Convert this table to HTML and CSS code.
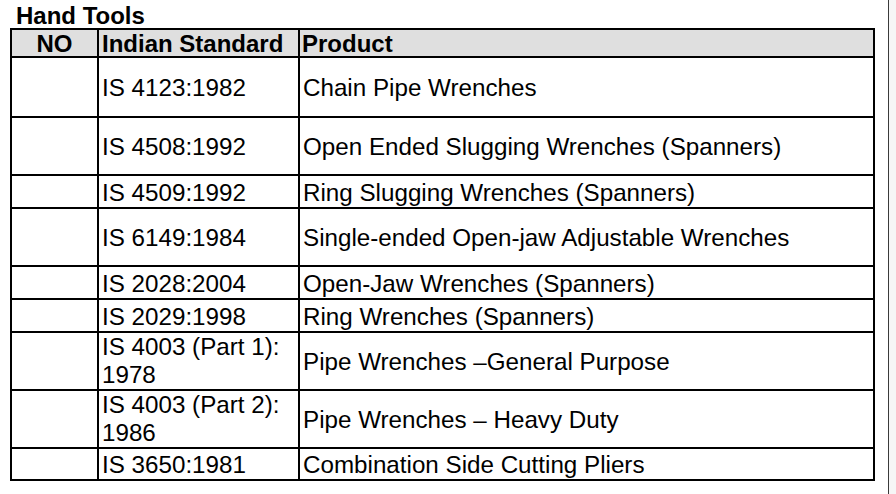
FILE: index.html
```html
<!DOCTYPE html>
<html>
<head>
<meta charset="utf-8">
<title>Hand Tools</title>
<link rel="stylesheet" href="styles.css">
</head>
<body>
<div class="page">
  <div class="sheet">
    <div class="title">Hand Tools</div>
    <table class="grid">
      <colgroup>
        <col class="c-no">
        <col class="c-std">
        <col class="c-prod">
      </colgroup>
      <thead>
        <tr class="h28">
          <th class="no">NO</th>
          <th class="std">Indian Standard</th>
          <th class="prod">Product</th>
        </tr>
      </thead>
      <tbody>
        <tr class="h60"><td></td><td class="std">IS 4123:1982</td><td class="prod">Chain Pipe Wrenches</td></tr>
        <tr class="h58"><td></td><td class="std">IS 4508:1992</td><td class="prod">Open Ended Slugging Wrenches (Spanners)</td></tr>
        <tr class="h33"><td></td><td class="std">IS 4509:1992</td><td class="prod">Ring Slugging Wrenches (Spanners)</td></tr>
        <tr class="h58"><td></td><td class="std">IS 6149:1984</td><td class="prod">Single-ended Open-jaw Adjustable Wrenches</td></tr>
        <tr class="h33"><td></td><td class="std">IS 2028:2004</td><td class="prod">Open-Jaw Wrenches (Spanners)</td></tr>
        <tr class="h33"><td></td><td class="std">IS 2029:1998</td><td class="prod">Ring Wrenches (Spanners)</td></tr>
        <tr class="h58"><td></td><td class="std two">IS 4003 (Part 1):<br>1978</td><td class="prod">Pipe Wrenches –General Purpose</td></tr>
        <tr class="h58"><td></td><td class="std two">IS 4003 (Part 2):<br>1986</td><td class="prod">Pipe Wrenches – Heavy Duty</td></tr>
        <tr class="h32"><td></td><td class="std">IS 3650:1981</td><td class="prod">Combination Side Cutting Pliers</td></tr>
      </tbody>
    </table>
  </div>
  <div class="gutter"></div>
</div>
</body>
</html>
```

FILE: styles.css
```css
html, body {
  margin: 0;
  padding: 0;
  background: #ffffff;
}

body {
  font-family: "Liberation Sans", Arial, sans-serif;
  color: #000;
}

.page {
  display: flex;
  width: 896px;
  height: 494px;
  overflow: hidden;
}

.sheet {
  width: 888px;
  height: 494px;
  border-right: 1px solid #3a3a3a;
  background: #ffffff;
}

.gutter {
  flex: 1;
  background: #f6f6f6;
}

.title {
  font-weight: bold;
  font-size: 24px;
  line-height: 24px;
  padding: 4px 0 0 16px;
  height: 24px;
}

.grid {
  margin-left: 10px;
  width: 865px;
  table-layout: fixed;
  border-collapse: separate;
  border-spacing: 0;
  border-left: 2px solid #000;
  border-top: 2px solid #000;
  font-size: 24.2px;
  line-height: 28px;
}

.c-no { width: 87px; }
.c-std { width: 201px; }
.c-prod { width: 575px; }

.grid th,
.grid td {
  box-sizing: border-box;
  border-right: 2px solid #000;
  border-bottom: 2px solid #000;
  padding: 0;
  vertical-align: middle;
  text-align: left;
  white-space: nowrap;
}

.grid td {
  padding-top: 2px;
}

.grid th {
  background: #dfdfdf;
  font-weight: bold;
  font-size: 24px;
  line-height: 25px;
  padding-top: 1px;
}

.grid th.no { text-align: center; }
.grid th.std { padding-left: 3px; }
.grid th.prod { padding-left: 2px; }

.grid td.std { padding-left: 3px; }
.grid td.prod { padding-left: 3px; }
.grid td.two { padding-top: 0; }

.h28 > * { height: 28px; }
.h60 > * { height: 60px; }
.h58 > * { height: 58px; }
.h33 > * { height: 33px; }
.h32 > * { height: 32px; }
```
